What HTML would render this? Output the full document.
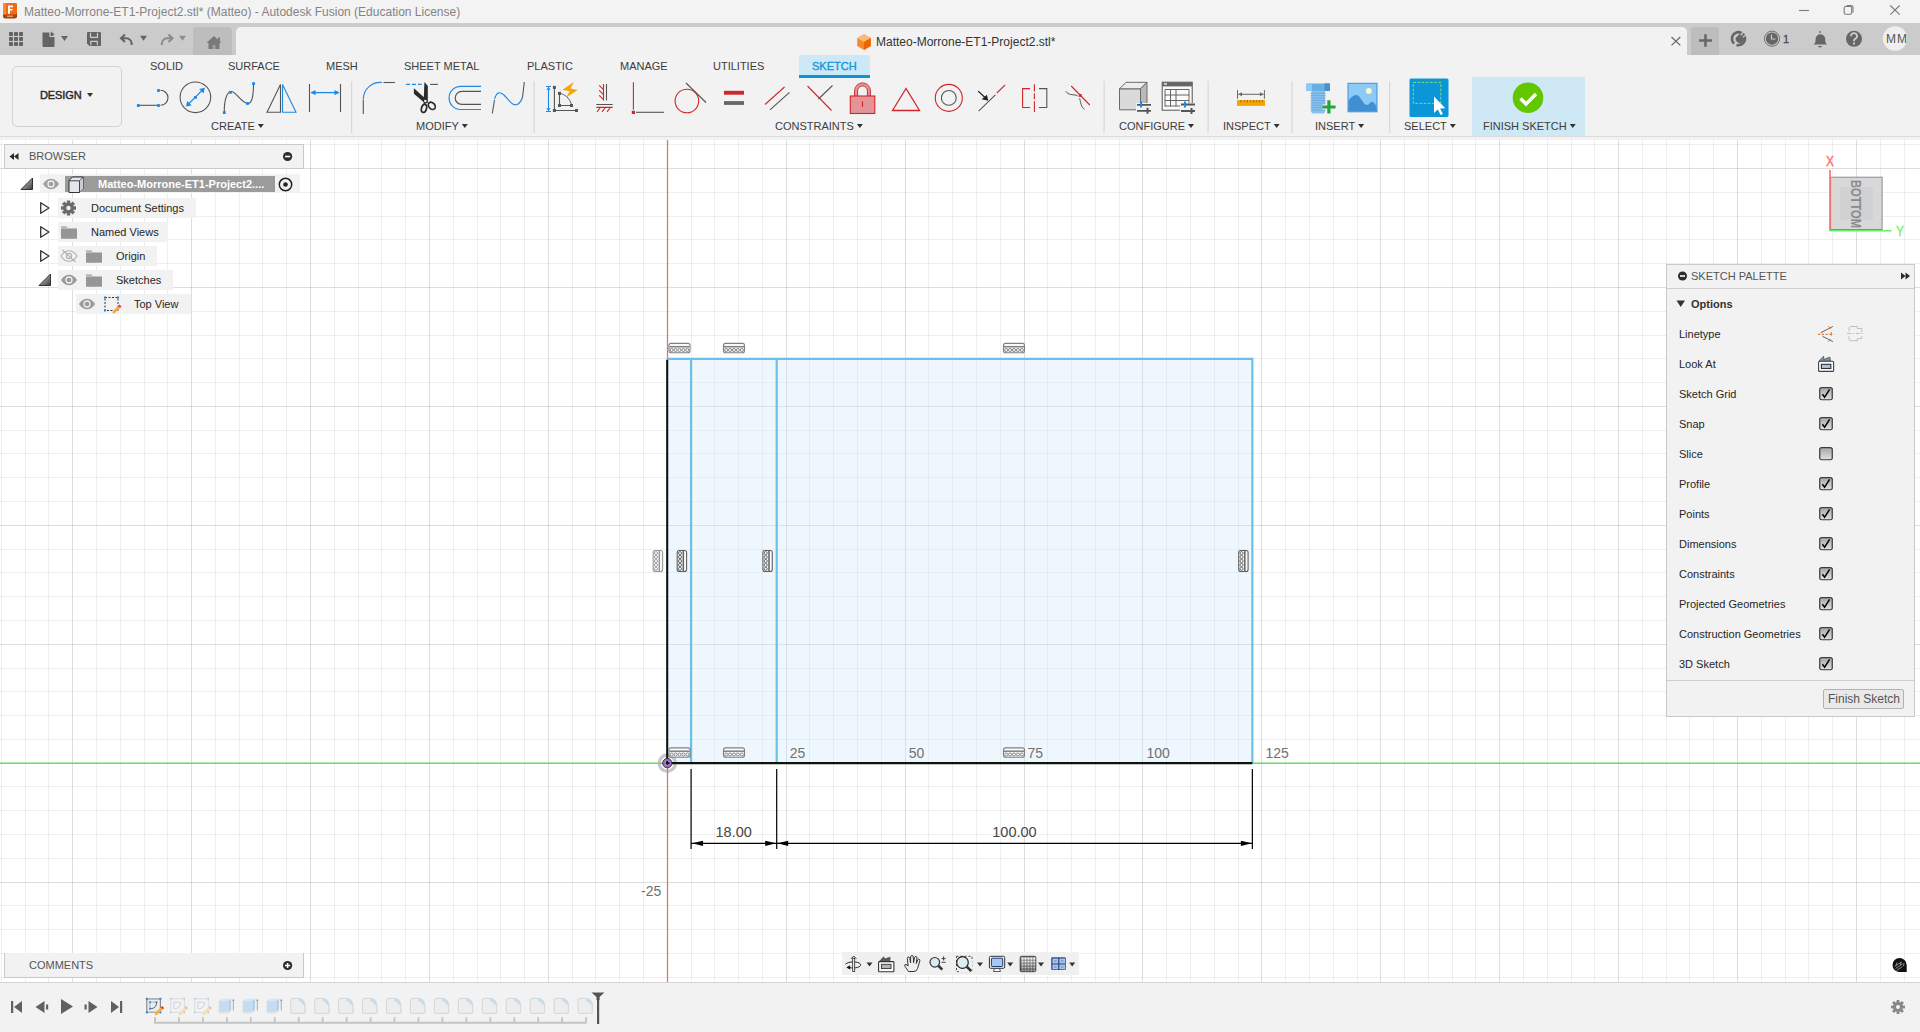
<!DOCTYPE html><html><head><meta charset="utf-8"><style>
html,body{margin:0;padding:0;width:1920px;height:1032px;overflow:hidden;background:#fff;font-family:'Liberation Sans', sans-serif}
.t{position:absolute;white-space:nowrap;line-height:normal}
.r{position:absolute}
.s{position:absolute;overflow:visible}
</style></head><body>
<svg class="s" style="left:0;top:0" width="1920" height="1032" viewBox="0 0 1920 1032"><rect x="0" y="137" width="1920" height="845" fill="#ffffff"/><path d="M1.5 140V982M25.5 140V982M48.5 140V982M96.5 140V982M120.5 140V982M144.5 140V982M167.5 140V982M215.5 140V982M239.5 140V982M262.5 140V982M286.5 140V982M334.5 140V982M358.5 140V982M381.5 140V982M405.5 140V982M453.5 140V982M477.5 140V982M500.5 140V982M524.5 140V982M572.5 140V982M595.5 140V982M619.5 140V982M643.5 140V982M691.5 140V982M714.5 140V982M738.5 140V982M762.5 140V982M809.5 140V982M833.5 140V982M857.5 140V982M881.5 140V982M928.5 140V982M952.5 140V982M976.5 140V982M1000.5 140V982M1047.5 140V982M1071.5 140V982M1095.5 140V982M1119.5 140V982M1166.5 140V982M1190.5 140V982M1214.5 140V982M1238.5 140V982M1285.5 140V982M1309.5 140V982M1333.5 140V982M1357.5 140V982M1404.5 140V982M1428.5 140V982M1452.5 140V982M1475.5 140V982M1523.5 140V982M1547.5 140V982M1571.5 140V982M1594.5 140V982M1642.5 140V982M1666.5 140V982M1689.5 140V982M1713.5 140V982M1761.5 140V982M1785.5 140V982M1808.5 140V982M1832.5 140V982M1880.5 140V982M1904.5 140V982" stroke="#000" stroke-opacity="0.063" stroke-width="1" fill="none"/><path d="M0 144.5H1920M0 192.5H1920M0 216.5H1920M0 239.5H1920M0 263.5H1920M0 311.5H1920M0 335.5H1920M0 358.5H1920M0 382.5H1920M0 430.5H1920M0 453.5H1920M0 477.5H1920M0 501.5H1920M0 549.5H1920M0 572.5H1920M0 596.5H1920M0 620.5H1920M0 668.5H1920M0 691.5H1920M0 715.5H1920M0 739.5H1920M0 786.5H1920M0 810.5H1920M0 834.5H1920M0 858.5H1920M0 905.5H1920M0 929.5H1920M0 953.5H1920M0 977.5H1920" stroke="#000" stroke-opacity="0.063" stroke-width="1" fill="none"/><path d="M72.5 140V982M191.5 140V982M310.5 140V982M429.5 140V982M548.5 140V982M786.5 140V982M905.5 140V982M1024.5 140V982M1142.5 140V982M1261.5 140V982M1380.5 140V982M1499.5 140V982M1618.5 140V982M1737.5 140V982M1856.5 140V982" stroke="#000" stroke-opacity="0.129" stroke-width="1" fill="none"/><path d="M0 168.5H1920M0 287.5H1920M0 406.5H1920M0 525.5H1920M0 644.5H1920M0 882.5H1920" stroke="#000" stroke-opacity="0.129" stroke-width="1" fill="none"/><rect x="667.3" y="358.83899999999994" width="585.0618000000002" height="404.31100000000004" fill="#d4eafb" fill-opacity="0.36"/><circle cx="667.3" cy="763.15" r="8.1" fill="none" stroke="#c2c2c2" stroke-width="3.4" opacity="0.9"/><path d="M667.5 140V358.83899999999994M667.5 763.15V982" stroke="#ee6b6b" stroke-width="1.25"/><path d="M0 763.2H667M1252.3618000000001 763.2H1920" stroke="#5fe05f" stroke-width="1.6"/><path d="M666.8 358.83899999999994H1252.3618000000001V763.15M691.083 358.83899999999994V763.15M776.7017999999999 358.83899999999994V763.15" stroke="#6cc0e8" stroke-width="2.2" fill="none"/><path d="M667.2 359.83899999999994V763.15H1252.3618000000001" stroke="#0c140c" stroke-width="2.1" fill="none"/><g font-family="Liberation Sans" font-size="14" fill="#707070"><text x="789.7149999999999" y="757.6">25</text><text x="908.63" y="757.6">50</text><text x="1027.545" y="757.6">75</text><text x="1146.46" y="757.6">100</text><text x="1265.375" y="757.6">125</text><text x="641" y="896">-25</text></g><g fill="none" stroke="#808080" stroke-width="1.1"><rect x="669.0" y="343.4" width="21" height="9.4" rx="2" fill="#fafafa" fill-opacity="0.85"/><path d="M669.5 346.7H689.5" stroke-width="1.5"/><g stroke-width="0.95"><circle cx="671.7" cy="350.0" r="1.55"/><circle cx="675.6" cy="350.0" r="1.55"/><circle cx="679.5" cy="350.0" r="1.55"/><circle cx="683.4000000000001" cy="350.0" r="1.55"/><circle cx="687.3000000000001" cy="350.0" r="1.55"/></g></g><g fill="none" stroke="#808080" stroke-width="1.1"><rect x="669.0" y="747.9" width="21" height="9.4" rx="2" fill="#fafafa" fill-opacity="0.85"/><path d="M669.5 751.1999999999999H689.5" stroke-width="1.5"/><g stroke-width="0.95"><circle cx="671.7" cy="754.5" r="1.55"/><circle cx="675.6" cy="754.5" r="1.55"/><circle cx="679.5" cy="754.5" r="1.55"/><circle cx="683.4000000000001" cy="754.5" r="1.55"/><circle cx="687.3000000000001" cy="754.5" r="1.55"/></g></g><g fill="none" stroke="#808080" stroke-width="1.1"><rect x="723.5" y="343.4" width="21" height="9.4" rx="2" fill="#fafafa" fill-opacity="0.85"/><path d="M724.0 346.7H744.0" stroke-width="1.5"/><g stroke-width="0.95"><circle cx="726.2" cy="350.0" r="1.55"/><circle cx="730.1" cy="350.0" r="1.55"/><circle cx="734.0" cy="350.0" r="1.55"/><circle cx="737.9000000000001" cy="350.0" r="1.55"/><circle cx="741.8000000000001" cy="350.0" r="1.55"/></g></g><g fill="none" stroke="#808080" stroke-width="1.1"><rect x="723.5" y="747.9" width="21" height="9.4" rx="2" fill="#fafafa" fill-opacity="0.85"/><path d="M724.0 751.1999999999999H744.0" stroke-width="1.5"/><g stroke-width="0.95"><circle cx="726.2" cy="754.5" r="1.55"/><circle cx="730.1" cy="754.5" r="1.55"/><circle cx="734.0" cy="754.5" r="1.55"/><circle cx="737.9000000000001" cy="754.5" r="1.55"/><circle cx="741.8000000000001" cy="754.5" r="1.55"/></g></g><g fill="none" stroke="#808080" stroke-width="1.1"><rect x="1003.5" y="343.4" width="21" height="9.4" rx="2" fill="#fafafa" fill-opacity="0.85"/><path d="M1004.0 346.7H1024.0" stroke-width="1.5"/><g stroke-width="0.95"><circle cx="1006.2" cy="350.0" r="1.55"/><circle cx="1010.1" cy="350.0" r="1.55"/><circle cx="1014.0" cy="350.0" r="1.55"/><circle cx="1017.9000000000001" cy="350.0" r="1.55"/><circle cx="1021.8000000000001" cy="350.0" r="1.55"/></g></g><g fill="none" stroke="#808080" stroke-width="1.1"><rect x="1003.5" y="747.9" width="21" height="9.4" rx="2" fill="#fafafa" fill-opacity="0.85"/><path d="M1004.0 751.1999999999999H1024.0" stroke-width="1.5"/><g stroke-width="0.95"><circle cx="1006.2" cy="754.5" r="1.55"/><circle cx="1010.1" cy="754.5" r="1.55"/><circle cx="1014.0" cy="754.5" r="1.55"/><circle cx="1017.9000000000001" cy="754.5" r="1.55"/><circle cx="1021.8000000000001" cy="754.5" r="1.55"/></g></g><g transform="rotate(90 658 561)"><g fill="none" stroke="#9a9a9a" stroke-width="1.1"><rect x="647.5" y="556.4" width="21" height="9.4" rx="2" fill="#fafafa" fill-opacity="0.85"/><path d="M648.0 559.6999999999999H668.0" stroke-width="1.5"/><g stroke-width="0.95"><circle cx="650.2" cy="563.0" r="1.55"/><circle cx="654.1" cy="563.0" r="1.55"/><circle cx="658.0" cy="563.0" r="1.55"/><circle cx="661.9000000000001" cy="563.0" r="1.55"/><circle cx="665.8000000000001" cy="563.0" r="1.55"/></g></g></g><g transform="rotate(90 682 561)"><g fill="none" stroke="#606060" stroke-width="1.1"><rect x="671.5" y="556.4" width="21" height="9.4" rx="2" fill="#fafafa" fill-opacity="0.85"/><path d="M672.0 559.6999999999999H692.0" stroke-width="1.5"/><g stroke-width="0.95"><circle cx="674.2" cy="563.0" r="1.55"/><circle cx="678.1" cy="563.0" r="1.55"/><circle cx="682.0" cy="563.0" r="1.55"/><circle cx="685.9000000000001" cy="563.0" r="1.55"/><circle cx="689.8000000000001" cy="563.0" r="1.55"/></g></g></g><g transform="rotate(90 767.7 561)"><g fill="none" stroke="#606060" stroke-width="1.1"><rect x="757.2" y="556.4" width="21" height="9.4" rx="2" fill="#fafafa" fill-opacity="0.85"/><path d="M757.7 559.6999999999999H777.7" stroke-width="1.5"/><g stroke-width="0.95"><circle cx="759.9000000000001" cy="563.0" r="1.55"/><circle cx="763.8000000000001" cy="563.0" r="1.55"/><circle cx="767.7" cy="563.0" r="1.55"/><circle cx="771.6000000000001" cy="563.0" r="1.55"/><circle cx="775.5000000000001" cy="563.0" r="1.55"/></g></g></g><g transform="rotate(90 1243.5 561)"><g fill="none" stroke="#606060" stroke-width="1.1"><rect x="1233.0" y="556.4" width="21" height="9.4" rx="2" fill="#fafafa" fill-opacity="0.85"/><path d="M1233.5 559.6999999999999H1253.5" stroke-width="1.5"/><g stroke-width="0.95"><circle cx="1235.7" cy="563.0" r="1.55"/><circle cx="1239.6000000000001" cy="563.0" r="1.55"/><circle cx="1243.5" cy="563.0" r="1.55"/><circle cx="1247.4" cy="563.0" r="1.55"/><circle cx="1251.3" cy="563.0" r="1.55"/></g></g></g><path d="M691.083 769V849M776.7017999999999 769V849M1252.3618000000001 769V849" stroke="#000" stroke-width="1.2"/><path d="M691.083 843.3H1252.3618000000001" stroke="#000" stroke-width="1.2"/><path d="M692.083 843.3l11 -2.6v5.2z" fill="#000"/><path d="M776.2017999999999 843.3l-11 -2.6v5.2z" fill="#000"/><path d="M777.2017999999999 843.3l11 -2.6v5.2z" fill="#000"/><path d="M1251.8618000000001 843.3l-11 -2.6v5.2z" fill="#000"/><g font-family="Liberation Sans" font-size="14.5" fill="#464646"><text x="715.5" y="836.6">18.00</text><text x="992.3" y="836.6">100.00</text></g><circle cx="667.3" cy="763.15" r="3.4" fill="none" stroke="#9a66c8" stroke-width="2.4"/><circle cx="667.3" cy="763.15" r="4.7" fill="none" stroke="#222" stroke-width="0.8"/><circle cx="667.3" cy="763.15" r="1.6" fill="#111"/></svg>
<div class="r" style="left:0px;top:0px;width:1920px;height:23px;background:#f3f3f3;"></div>
<svg class="s" style="left:3px;top:3px;" width="15" height="16" viewBox="0 0 15 16"><rect x="0" y="0" width="14" height="15.5" rx="2" fill="#a8400a"/><rect x="0" y="0" width="14" height="11.5" rx="2" fill="#f26b10"/><rect x="0" y="0" width="3" height="11.5" fill="#f8893a"/><path d="M5 2.5h5v1.8H7v1.6h2.6v1.7H7v3.2H5z" fill="#fff"/><rect x="4" y="12.6" width="6" height="1.2" fill="#e0b090"/></svg>
<div class="t" style="left:24px;top:5px;font-size:12px;color:#838383;font-weight:normal;">Matteo-Morrone-ET1-Project2.stl* (Matteo) - Autodesk Fusion (Education License)</div>
<svg class="s" style="left:1790px;top:0px;" width="120" height="23" viewBox="0 0 120 23"><g stroke="#7a7a7a" stroke-width="1.1" fill="none"><path d="M9 10.5H19"/><rect x="54.2" y="6.5" width="7.5" height="7.8" rx="1.5"/><path d="M56.5 5.5h4.5a2 2 0 0 1 2 2v5"/><path d="M100.3 5.5l9.4 9.2M109.7 5.5l-9.4 9.2"/></g></svg>
<div class="r" style="left:0px;top:23px;width:1920px;height:32px;background:#cbcbcb;"></div>
<svg class="s" style="left:0px;top:0px;" width="30" height="56" viewBox="0 0 30 56"><rect x="9" y="32" width="4" height="4" rx="0.8" fill="#646464"/><rect x="9" y="37" width="4" height="4" rx="0.8" fill="#646464"/><rect x="9" y="42" width="4" height="4" rx="0.8" fill="#646464"/><rect x="14" y="32" width="4" height="4" rx="0.8" fill="#646464"/><rect x="14" y="37" width="4" height="4" rx="0.8" fill="#646464"/><rect x="14" y="42" width="4" height="4" rx="0.8" fill="#646464"/><rect x="19" y="32" width="4" height="4" rx="0.8" fill="#646464"/><rect x="19" y="37" width="4" height="4" rx="0.8" fill="#646464"/><rect x="19" y="42" width="4" height="4" rx="0.8" fill="#646464"/></svg>
<svg class="s" style="left:0px;top:0px;" width="200" height="56" viewBox="0 0 200 56"><path d="M42.5 32.5h7.5l4.5 4.5v9.2a0.8 0.8 0 0 1-.8.8h-10.4a0.8 0.8 0 0 1-.8-.8z" fill="#646464"/><path d="M51 31.2l3.8 3.8h-3.8z" fill="#646464"/><path d="M50 32v4.5h4.5" fill="none" stroke="#cbcbcb" stroke-width="1.2"/><path d="M61 36h7l-3.5 5z" fill="#646464"/><path d="M87 33a1 1 0 0 1 1-1h12a1 1 0 0 1 1 1v12a1 1 0 0 1-1 1h-10.5l-2.5-2.5z" fill="#646464"/><path d="M90.5 32.8v4.6h7v-4.6M90.8 45.2v-3.8h6.5v3.8" fill="none" stroke="#cbcbcb" stroke-width="1.2"/><path d="M125 34.5l-4 3.8 4 3.6M121 38.3h5.2a5.5 5.5 0 0 1 5.5 5.5v1.3" fill="none" stroke="#646464" stroke-width="2"/><path d="M140 35.8h7l-3.5 5z" fill="#646464"/><path d="M168.5 34.5l4 3.8-4 3.6M172.5 38.3h-5.2a5.5 5.5 0 0 0-5.5 5.5v1.3" fill="none" stroke="#8a8a8a" stroke-width="2"/><path d="M179 35.8h7l-3.5 5z" fill="#8e8e8e"/></svg>
<div class="r" style="left:193px;top:27px;width:39px;height:28px;background:#bdbdbd;border-radius:4px 4px 0 0"></div>
<svg class="s" style="left:0px;top:0px;" width="240" height="56" viewBox="0 0 240 56"><path d="M214 36l-7.5 6.8h2v6.2h11v-6.2h2z M218 37.5v3l2 1.8v-4.8z" fill="#7a7a7a"/><rect x="212.5" y="45" width="3" height="4" fill="#a0a0a0"/></svg>
<div class="r" style="left:236px;top:27px;width:1451px;height:28px;background:#f2f2f2;border-radius:5px 5px 0 0"></div>
<svg class="s" style="left:857px;top:34px;" width="15" height="17" viewBox="0 0 15 17"><path d="M7 0.3l6.8 3.8v8l-6.8 3.9-6.8-3.9v-8z" fill="#f58a2a"/><path d="M7 0.3l6.8 3.8-6.8 3.9-6.8-3.9z" fill="#fbb87a"/><path d="M7 8l6.8-3.9v8l-6.8 3.9z" fill="#f06400"/></svg>
<div class="t" style="left:876px;top:35px;font-size:12px;color:#333;font-weight:normal;">Matteo-Morrone-ET1-Project2.stl*</div>
<svg class="s" style="left:0px;top:0px;" width="1920" height="56" viewBox="0 0 1920 56"><path d="M1671.5 37l8.8 8.4M1680.3 37l-8.8 8.4" stroke="#6a6a6a" stroke-width="1.3"/></svg>
<div class="r" style="left:1691px;top:27px;width:28px;height:28px;background:#bdbdbd;border-radius:4px 4px 0 0"></div>
<svg class="s" style="left:0px;top:0px;" width="1920" height="56" viewBox="0 0 1920 56"><path d="M1705.5 34.2v12.6M1699 40.5h13" stroke="#686868" stroke-width="2.6"/><path d="M1734.2 43.6A6.5 6.5 0 1 1 1736.5 44.9" fill="none" stroke="#666" stroke-width="2.6"/><path d="M1740 33.5l5.5 5.5-3.5 3.5a3 3 0 0 1-4.2 0l-1.3-1.3a3 3 0 0 1 0-4.2z" fill="#666"/><path d="M1740.6 35l3.3-3.3M1743 37.4l3.3-3.3" stroke="#cbcbcb" stroke-width="1.3"/><path d="M1737 40.8a2.2 2.2 0 0 1 3-3" fill="none" stroke="#cbcbcb" stroke-width="0"/><circle cx="1772" cy="38.7" r="7.6" fill="none" stroke="#666" stroke-width="0.9"/><circle cx="1772" cy="38.7" r="6.2" fill="#666"/><path d="M1771.5 34.5v4.5h4" fill="none" stroke="#cbcbcb" stroke-width="1.2"/><path d="M1813.8 44.6c1.6-1.5 1.8-3 1.8-5.5a4.8 4.8 0 0 1 9.6 0c0 2.5 .2 4 1.8 5.5z" fill="#666"/><rect x="1819.3" y="31" width="1.4" height="2" fill="#666"/><path d="M1818 46h4a2 1.4 0 0 1-4 0z" fill="#666"/><circle cx="1854" cy="38.8" r="8" fill="#666"/><path d="M1851 36.2a3 3 0 1 1 4.2 2.7c-.8.4-1.2.9-1.2 1.8v.6" fill="none" stroke="#cbcbcb" stroke-width="1.8"/><rect x="1853" y="42.5" width="2" height="2" fill="#cbcbcb"/><circle cx="1895" cy="38.5" r="12.2" fill="#efefef"/></svg>
<div class="t" style="left:1783px;top:33px;font-size:11px;color:#4a4a4a;font-weight:normal;-webkit-text-stroke:0.3px #4a4a4a">1</div>
<div class="t" style="left:1886px;top:32px;font-size:12px;color:#555;font-weight:normal;letter-spacing:1px">MM</div>
<div class="r" style="left:0px;top:55px;width:236px;height:82px;background:#f2f2f2;"></div>
<div class="r" style="left:236px;top:55px;width:1684px;height:82px;background:#f2f2f2;"></div>
<div class="r" style="left:0px;top:136px;width:1920px;height:1px;background:#dcdcdc;"></div>
<div class="r" style="left:0px;top:137px;width:1920px;height:3px;background:#f2f2f2;"></div>
<div class="r" style="left:12px;top:66px;width:108px;height:59px;background:transparent;border:1px solid #d2d2d2;border-radius:5px"></div>
<div class="t" style="left:40px;top:89px;font-size:11px;color:#2a2a2a;font-weight:normal;-webkit-text-stroke:0.45px #2a2a2a;letter-spacing:-0.1px">DESIGN</div>
<svg class="s" style="left:0px;top:0px;" width="120" height="140" viewBox="0 0 120 140"><path d="M87 93h6l-3 4z" fill="#333"/></svg>
<div class="t" style="left:150px;top:60px;font-size:11px;color:#3c3c3c;font-weight:normal;">SOLID</div>
<div class="t" style="left:228px;top:60px;font-size:11px;color:#3c3c3c;font-weight:normal;">SURFACE</div>
<div class="t" style="left:326px;top:60px;font-size:11px;color:#3c3c3c;font-weight:normal;">MESH</div>
<div class="t" style="left:404px;top:60px;font-size:11px;color:#3c3c3c;font-weight:normal;">SHEET METAL</div>
<div class="t" style="left:527px;top:60px;font-size:11px;color:#3c3c3c;font-weight:normal;">PLASTIC</div>
<div class="t" style="left:620px;top:60px;font-size:11px;color:#3c3c3c;font-weight:normal;">MANAGE</div>
<div class="t" style="left:713px;top:60px;font-size:11px;color:#3c3c3c;font-weight:normal;">UTILITIES</div>
<div class="r" style="left:799px;top:55px;width:71px;height:23px;background:#cde8f6;"></div>
<div class="r" style="left:799px;top:75px;width:71px;height:3px;background:#0b96d8;"></div>
<div class="t" style="left:812px;top:60px;font-size:11px;color:#1296d6;font-weight:normal;-webkit-text-stroke:0.35px #1296d6">SKETCH</div>
<div class="t" style="left:211px;top:120px;font-size:11px;color:#3c3c3c;font-weight:normal;">CREATE</div>
<div class="t" style="left:416px;top:120px;font-size:11px;color:#3c3c3c;font-weight:normal;">MODIFY</div>
<div class="t" style="left:775px;top:120px;font-size:11px;color:#3c3c3c;font-weight:normal;">CONSTRAINTS</div>
<div class="t" style="left:1119px;top:120px;font-size:11px;color:#3c3c3c;font-weight:normal;">CONFIGURE</div>
<div class="t" style="left:1223px;top:120px;font-size:11px;color:#3c3c3c;font-weight:normal;">INSPECT</div>
<div class="t" style="left:1315px;top:120px;font-size:11px;color:#3c3c3c;font-weight:normal;">INSERT</div>
<div class="t" style="left:1404px;top:120px;font-size:11px;color:#3c3c3c;font-weight:normal;">SELECT</div>
<div class="r" style="left:1472px;top:77px;width:113px;height:59px;background:#cfe8f5;"></div>
<div class="t" style="left:1483px;top:120px;font-size:11px;color:#3c3c3c;font-weight:normal;">FINISH SKETCH</div>
<svg class="s" style="left:0px;top:0px;" width="1920" height="140" viewBox="0 0 1920 140"><path d="M257.8125 124h6l-3 4z" fill="#333"/><path d="M461.78125 124h6l-3 4z" fill="#333"/><path d="M856.84375 124h6l-3 4z" fill="#333"/><path d="M1188.0 124h6l-3 4z" fill="#333"/><path d="M1273.6875 124h6l-3 4z" fill="#333"/><path d="M1358.140625 124h6l-3 4z" fill="#333"/><path d="M1449.8125 124h6l-3 4z" fill="#333"/><path d="M1569.75 124h6l-3 4z" fill="#333"/><rect x="351" y="81" width="1.2" height="52" fill="#d8d8d8"/><rect x="533.5" y="81" width="1.2" height="52" fill="#d8d8d8"/><rect x="1103.5" y="81" width="1.2" height="52" fill="#d8d8d8"/><rect x="1207.5" y="81" width="1.2" height="52" fill="#d8d8d8"/><rect x="1291.5" y="81" width="1.2" height="52" fill="#d8d8d8"/><rect x="1389" y="81" width="1.2" height="52" fill="#d8d8d8"/></svg>
<svg class="s" style="left:0px;top:0px;" width="1920" height="140" viewBox="0 0 1920 140"><path d="M138 105.3H158.5" stroke="#555" stroke-width="1.1"/><path d="M160.5 90.3a7.5 7.5 0 0 1 0 15" fill="none" stroke="#555" stroke-width="1.1"/><rect x="136.9" y="104.1" width="2.8" height="2.8" fill="#1e88e5"/><rect x="157.1" y="104.1" width="2.8" height="2.8" fill="#1e88e5"/><rect x="157.1" y="89.1" width="2.8" height="2.8" fill="#1e88e5"/><circle cx="195.4" cy="97.3" r="15.3" fill="none" stroke="#555" stroke-width="1.1"/><path d="M188 104.5l14-14" stroke="#1e88e5" stroke-width="1.1"/><path d="M204.8 87.8l-5.6 1.2 4.4 4.4z M186 106.6l1.2-5.6 4.4 4.4z" fill="#1e88e5"/><rect x="194.1" y="96.0" width="2.8" height="2.8" fill="#1e88e5"/><path d="M224.3 112.5C224 100 227 92 231 91.5 236 91 240 102 247.5 103.5 252 104 253.5 96 253.5 83.5" fill="none" stroke="#555" stroke-width="1.1"/><rect x="222.9" y="111.19999999999999" width="2.8" height="2.8" fill="#1e88e5"/><rect x="229.1" y="90.89999999999999" width="2.8" height="2.8" fill="#1e88e5"/><rect x="246.1" y="102.1" width="2.8" height="2.8" fill="#1e88e5"/><rect x="252.2" y="82.19999999999999" width="2.8" height="2.8" fill="#1e88e5"/><path d="M267 112.3L280.5 84.5V112.3Z" fill="none" stroke="#555" stroke-width="1.1"/><path d="M282.5 84.5L296 112.3H282.5Z" fill="none" stroke="#1e88e5" stroke-width="1.1"/><path d="M309.5 84v28M340.5 84v28" stroke="#555" stroke-width="1.1"/><path d="M311 92.6h28" stroke="#1e88e5" stroke-width="1.3"/><path d="M310.5 92.6l5-2.6v5.2zM339.5 92.6l-5-2.6v5.2z" fill="#1e88e5"/><path d="M363.3 99.5v14.5" stroke="#555" stroke-width="1.1"/><path d="M363.3 99A17 17 0 0 1 382 82.5" fill="none" stroke="#1e88e5" stroke-width="1.1"/><path d="M383.5 82.5H395" stroke="#555" stroke-width="1.1"/><path d="M406 84.4h15.7" stroke="#1e88e5" stroke-width="1.1" stroke-dasharray="4 2"/><path d="M430.1 84.4h7.8" stroke="#555" stroke-width="1.1"/><path d="M424.4 82l3.4 4v16.8l-4.2 1.5z" fill="#2a2a2a"/><path d="M413.9 88.2l12.6 11.3-1.2 4-11.4-9.8z" fill="#2a2a2a"/><circle cx="425.3" cy="100.9" r="1.25" fill="#f2f2f2"/><ellipse cx="424" cy="108.4" rx="2.5" ry="4.1" transform="rotate(15 424 108.4)" fill="none" stroke="#2a2a2a" stroke-width="1.7"/><ellipse cx="431.8" cy="105.8" rx="3" ry="4" transform="rotate(-40 431.8 105.8)" fill="none" stroke="#2a2a2a" stroke-width="1.7"/><path d="M481 86.3h-20.3a11.6 11.6 0 0 0 0 23.2h20.3" fill="none" stroke="#1e88e5" stroke-width="1.2"/><path d="M481 91.4h-19.3a6.5 6.5 0 0 0 0 13h19.3" fill="none" stroke="#555" stroke-width="1.2"/><path d="M492.3 113.5L494.5 100" fill="none" stroke="#555" stroke-width="1.1"/><path d="M494.5 99C497 91 500 92 504 95 510 101 513 107 518 104 521 102 522 99 522.5 97" fill="none" stroke="#1e88e5" stroke-width="1.1"/><path d="M522.5 97.5L524.3 82" fill="none" stroke="#555" stroke-width="1.1"/><path d="M548.5 87v24M546 86.5h5M546 111.5h5" stroke="#1e88e5" stroke-width="1.1"/><path d="M548.5 87.2l-2.3 2.6h4.6zM548.5 110.8l-2.3-2.6h4.6z" fill="#1e88e5"/><path d="M554.4 87.4v23.1h22.1M559.5 93.4v12.1h12" fill="none" stroke="#555" stroke-width="1.1"/><path d="M559.5 93.4c5 .5 11 5 12 12.1" fill="none" stroke="#555" stroke-width="0.9"/><rect x="552.9" y="85.9" width="3" height="3" fill="#555"/><rect x="552.9" y="109.0" width="3" height="3" fill="#555"/><rect x="575.0" y="109.0" width="3" height="3" fill="#555"/><rect x="558.0" y="91.9" width="3" height="3" fill="#555"/><rect x="558.0" y="104.0" width="3" height="3" fill="#555"/><rect x="570.0" y="104.0" width="3" height="3" fill="#555"/><path d="M573.8 82L562.5 89.8 569.6 91.2 566.2 97.6 577.7 90 570.6 88.4Z" fill="#f5a50a"/><path d="M606.5 84V100.5M596.3 104.5H612.7" stroke="#555" stroke-width="1.1"/><path d="M603.5 84V100.5M599.2 85.3l4.3 4.4M599.2 90.3l4.3 4.4M599.2 95.3l4.3 4.4M596.3 107.4H612.7M597 111.8l3-3.8M602 111.8l3-3.8M607 111.8l3-3.8" stroke="#d0262b" stroke-width="1.1" fill="none"/><path d="M633.4 82.3v27.4" stroke="#d0262b" stroke-width="1.1"/><path d="M636 112.3H664" stroke="#555" stroke-width="1.1"/><rect x="631.8" y="110.80000000000001" width="3.2" height="3.2" fill="#d0262b"/><circle cx="686.9" cy="101" r="11.8" fill="none" stroke="#d0262b" stroke-width="1.1"/><path d="M686 83l20 19.5" stroke="#555" stroke-width="1.1"/><rect x="724" y="90.8" width="20" height="3.9" fill="#d0262b"/><rect x="724" y="101.1" width="20" height="3.8" fill="#666"/><path d="M765 104.5l19.5-17.5" stroke="#d0262b" stroke-width="1.1"/><path d="M770 109.8l19.5-17.5" stroke="#555" stroke-width="1.1"/><path d="M807.5 86l24 24.5" stroke="#d0262b" stroke-width="1.1"/><path d="M818.5 99l14-13.5" stroke="#555" stroke-width="1.1"/><path d="M856.2 96v-5.2a6.3 6.3 0 0 1 12.6 0V96" fill="none" stroke="#e39497" stroke-width="2.4"/><path d="M854.6 96v-5.2a7.9 7.9 0 0 1 15.8 0V96M857.6 96v-5.2a4.9 4.9 0 0 1 9.8 0V96" fill="none" stroke="#d0262b" stroke-width="1"/><rect x="850.3" y="96" width="24.5" height="17.5" fill="#e39497" stroke="#d0262b" stroke-width="1.1"/><path d="M862.5 101.3v5.6" stroke="#d0262b" stroke-width="1.1"/><path d="M906 88.5L892.5 110.5H919.5Z" fill="none" stroke="#d0262b" stroke-width="1.3"/><circle cx="948.8" cy="97.9" r="13.5" fill="none" stroke="#d0262b" stroke-width="1.1"/><circle cx="948.8" cy="97.9" r="7.4" fill="none" stroke="#555" stroke-width="1.1"/><path d="M978.6 111.2L995.4 94.8" stroke="#555" stroke-width="1.1"/><path d="M996.8 93L1005.2 84.9" stroke="#d0262b" stroke-width="1.1"/><path d="M978.2 91.1l6.5 6.2" stroke="#222" stroke-width="1.3"/><path d="M988.3 100.8l-6.6-1.5 5.2-4.5z" fill="#222"/><path d="M1030 88.6H1022.6V107.5H1030" fill="none" stroke="#d0262b" stroke-width="1.1"/><path d="M1039 88.6H1046.8V107.5H1039" fill="none" stroke="#555" stroke-width="1.1"/><path d="M1034.4 84.2V91.6M1034.4 93.3V99.3M1034.4 101.3V111.9" stroke="#d0262b" stroke-width="1.1"/><path d="M1065.8 91.2C1067 93.5 1069.5 94.5 1073 94.8 1076 95 1077.5 95.5 1078.2 96.3M1079.6 98.4C1080.5 101 1080.5 104 1082 106.5 1082.8 108 1083.5 108.8 1084.5 109.2" fill="none" stroke="#555" stroke-width="1"/><path d="M1071.2 86L1089.8 105" stroke="#d0262b" stroke-width="1.1"/><rect x="1078.8999999999999" y="94.1" width="2.8" height="2.8" fill="#d0262b"/><path d="M1119.5 88.8h21v21h-21z" fill="#dadada" stroke="#6a6a6a" stroke-width="1"/><path d="M1119.5 88.8l6.5-6.5h21l-6.5 6.5z" fill="#ececec" stroke="#6a6a6a" stroke-width="1" stroke-linejoin="round"/><path d="M1140.5 88.8l6.5-6.5v21l-6.5 6.5z" fill="#b9b9b9" stroke="#6a6a6a" stroke-width="1" stroke-linejoin="round"/><rect x="1136" y="103" width="16" height="11" fill="#f2f2f2"/><path d="M1137 104.8h14M1137 110.8h14" stroke="#555" stroke-width="1.8"/><path d="M1141 101.5v6" stroke="#1e88e5" stroke-width="2"/><path d="M1147.5 107.8v6" stroke="#555" stroke-width="2"/><rect x="1162.2" y="82.2" width="30" height="28" fill="#fafafa" stroke="#555" stroke-width="1"/><rect x="1162.2" y="82.2" width="30" height="4.2" fill="#666"/><rect x="1164" y="83.3" width="3" height="1.3" fill="#fff"/><path d="M1165 89.5h24M1165 95h24M1165 100.5h24M1165 106h24M1165 89.5v17M1170.5 89.5v17M1176 89.5v17M1189 89.5v17" stroke="#555" stroke-width="0.9" fill="none"/><rect x="1180" y="103" width="16" height="10" fill="#f2f2f2"/><path d="M1181 104.5h14M1181 111h14" stroke="#555" stroke-width="1.8"/><path d="M1185 101.5v6" stroke="#1e88e5" stroke-width="2"/><path d="M1191.5 108v6" stroke="#555" stroke-width="2"/><path d="M1237.5 90v8.8M1264.4 90v8.8M1238.5 94.3h25" stroke="#666" stroke-width="1"/><path d="M1238.2 94.3l3.8-2v4zM1263.7 94.3l-3.8-2v4z" fill="#666"/><rect x="1237" y="100.1" width="28" height="5.8" fill="#f5a300"/><path d="M1240.8 100.1v2.3M1244.6 100.1v1.6M1247.5 100.1v2.3M1250.8 100.1v1.6M1253.8 100.1v2.3M1256.7 100.1v1.6M1259.6 100.1v2.3M1262.5 100.1v1.6" stroke="#7a5a10" stroke-width="0.8"/><path d="M1306.3 85a1.6 1.6 0 0 1 1.6-1.6h20.5a1.6 1.6 0 0 1 1.6 1.6v5.9h-23.7z" fill="#6aafe2"/><rect x="1306.3" y="83.4" width="5.7" height="7.5" fill="#8ccaf7"/><rect x="1324.5" y="83.4" width="5.5" height="7.5" fill="#4a90cc"/><path d="M1311.3 90.9h13.7v20.5a2 2 0 0 1-2 2h-9.7a2 2 0 0 1-2-2z" fill="#8ac2ee"/><path d="M1310.5 93.3h15.3M1310.5 95.7h15.3M1310.5 98.1h15.3M1310.5 100.5h15.3M1310.5 102.9h15.3M1310.5 105.3h15.3M1310.5 107.7h15.3M1310.5 110.1h15.3" stroke="#5b9fd6" stroke-width="0.7"/><path d="M1328.9 100.3v13.3M1322.3 107h13.3" stroke="#f2f2f2" stroke-width="5.2"/><path d="M1328.9 100.3v13.3M1322.3 107h13.3" stroke="#20a63a" stroke-width="3.2"/><rect x="1348" y="83.3" width="29" height="28.5" fill="#8ccaf7" stroke="#3f8fd2" stroke-width="1"/><path d="M1348.5 100.5c2.5-3.5 5-5.5 8.2-5.5 3.5 0 6.5 10 10 10 2.5 0 3.5-3.2 5-3.2 2 0 3.5 2.5 4.8 4.5v5h-28z" fill="#3f8fd2"/><circle cx="1368.8" cy="90.9" r="2.9" fill="#fffbcc"/><rect x="1409.5" y="78.5" width="39" height="38.5" rx="1.5" fill="#0b96d8"/><rect x="1413.3" y="82.4" width="27.5" height="21" fill="none" stroke="#86e07a" stroke-width="1" stroke-dasharray="2.6 1.6"/><path d="M1434 96.5v16.5l3.7-3.6 3 5.6 2.2-1.1-2.8-5.4 5.2-.3z" fill="#fff"/><circle cx="1528" cy="97.7" r="15.3" fill="#63c700"/><path d="M1520.5 98.5l5.5 5.5 10-10" fill="none" stroke="#fff" stroke-width="3.4"/></svg>
<div class="r" style="left:4px;top:144px;width:298px;height:23px;background:#f2f2f2;border:1px solid #c9c9c9"></div>
<svg class="s" style="left:0px;top:0px;" width="320" height="320" viewBox="0 0 320 320"><path d="M9.5 156.5l4.5-3.5v7z M14 156.5l4.5-3.5v7z" fill="#2b2b2b"/><circle cx="287.6" cy="156.5" r="4.6" fill="#2d2d2d"/><rect x="285" y="155.7" width="5.2" height="1.6" fill="#fff"/></svg>
<div class="t" style="left:29px;top:150px;font-size:11px;color:#555;font-weight:normal;">BROWSER</div>
<div class="r" style="left:40px;top:174px;width:260px;height:19px;background:#f2f2f2;"></div>
<div class="r" style="left:65px;top:176px;width:210px;height:16px;background:#9b9b9b;"></div>
<div class="t" style="left:98px;top:178px;font-size:11px;color:#ffffff;font-weight:bold;">Matteo-Morrone-ET1-Project2....</div>
<div class="r" style="left:58px;top:198px;width:138px;height:20px;background:#f2f2f2;"></div>
<div class="t" style="left:91px;top:202px;font-size:11px;color:#262626;font-weight:normal;">Document Settings</div>
<div class="r" style="left:58px;top:222px;width:110px;height:20px;background:#f2f2f2;"></div>
<div class="t" style="left:91px;top:226px;font-size:11px;color:#262626;font-weight:normal;">Named Views</div>
<div class="r" style="left:58px;top:246px;width:99px;height:20px;background:#f2f2f2;"></div>
<div class="t" style="left:116px;top:250px;font-size:11px;color:#262626;font-weight:normal;">Origin</div>
<div class="r" style="left:58px;top:270px;width:115px;height:20px;background:#f2f2f2;"></div>
<div class="t" style="left:116px;top:274px;font-size:11px;color:#262626;font-weight:normal;">Sketches</div>
<div class="r" style="left:76px;top:294px;width:115px;height:20px;background:#f2f2f2;"></div>
<div class="t" style="left:134px;top:298px;font-size:11px;color:#262626;font-weight:normal;">Top View</div>
<svg class="s" style="left:0px;top:0px;" width="320" height="320" viewBox="0 0 320 320"><defs><linearGradient id="tg21178" x1="0" y1="0" x2="1" y2="1"><stop offset="0" stop-color="#dcdcdc"/><stop offset="1" stop-color="#3c3c3c"/></linearGradient></defs><path d="M21 189.5L32.5 178V189.5z" fill="url(#tg21178)" stroke="#222" stroke-width="0.9"/><path d="M43 184c2.5-3.8 5-5.3 8-5.3s5.5 1.5 8 5.3c-2.5 3.8-5 5.3-8 5.3s-5.5-1.5-8-5.3z" fill="#a0a0a0"/><circle cx="51" cy="184" r="3" fill="none" stroke="#f0f0f0" stroke-width="1.3"/><path d="M69 180.5l3.5-3.5h10.5v12l-3.5 3.5H69z" fill="#e3e6ea" stroke="#333" stroke-width="1"/><path d="M79.5 181v11.5M69 180.8h10.5l3.5-3.5" fill="none" stroke="#333" stroke-width="0.9"/><path d="M80 181l3-3v11l-3 3z" fill="#c9ccd2"/><circle cx="285.5" cy="184.5" r="6.2" fill="none" stroke="#222" stroke-width="1.5"/><circle cx="285.5" cy="184.5" r="2.3" fill="#222"/><path d="M40.7 202.7L49 208L40.7 213.3z" fill="#fafafa" stroke="#333" stroke-width="1.3" stroke-linejoin="round"/><g transform="translate(68.5 208)"><circle r="5.2" fill="#6a6a6a"/><rect x="-1.7" y="-7.5" width="3.4" height="4" fill="#6a6a6a" transform="rotate(0)"/><rect x="-1.7" y="-7.5" width="3.4" height="4" fill="#6a6a6a" transform="rotate(45)"/><rect x="-1.7" y="-7.5" width="3.4" height="4" fill="#6a6a6a" transform="rotate(90)"/><rect x="-1.7" y="-7.5" width="3.4" height="4" fill="#6a6a6a" transform="rotate(135)"/><rect x="-1.7" y="-7.5" width="3.4" height="4" fill="#6a6a6a" transform="rotate(180)"/><rect x="-1.7" y="-7.5" width="3.4" height="4" fill="#6a6a6a" transform="rotate(225)"/><rect x="-1.7" y="-7.5" width="3.4" height="4" fill="#6a6a6a" transform="rotate(270)"/><rect x="-1.7" y="-7.5" width="3.4" height="4" fill="#6a6a6a" transform="rotate(315)"/><circle r="2.2" fill="#f0f0f0"/></g><path d="M40.7 226.7L49 232L40.7 237.3z" fill="#fafafa" stroke="#333" stroke-width="1.3" stroke-linejoin="round"/><path d="M61 226.5h5.5l1 1.5H77V238.5H61z" fill="#969696"/><rect x="61" y="228.7" width="16" height="9.8" fill="#969696"/><path d="M61 228.1H77" stroke="#f0f0f0" stroke-width="0.8"/><path d="M40.7 250.7L49 256L40.7 261.3z" fill="#fafafa" stroke="#333" stroke-width="1.3" stroke-linejoin="round"/><g fill="none" stroke="#b0b0b0" stroke-width="1.1"><path d="M61 256c2.5-3.8 5-5.3 8-5.3s5.5 1.5 8 5.3c-2.5 3.8-5 5.3-8 5.3s-5.5-1.5-8-5.3z"/><circle cx="69" cy="256" r="2.6"/><path d="M62.5 250l13 12"/></g><path d="M86 250.5h5.5l1 1.5H102V262.5H86z" fill="#969696"/><rect x="86" y="252.7" width="16" height="9.8" fill="#969696"/><path d="M86 252.1H102" stroke="#f0f0f0" stroke-width="0.8"/><defs><linearGradient id="tg39274" x1="0" y1="0" x2="1" y2="1"><stop offset="0" stop-color="#dcdcdc"/><stop offset="1" stop-color="#3c3c3c"/></linearGradient></defs><path d="M39 285.5L50.5 274V285.5z" fill="url(#tg39274)" stroke="#222" stroke-width="0.9"/><path d="M61 280c2.5-3.8 5-5.3 8-5.3s5.5 1.5 8 5.3c-2.5 3.8-5 5.3-8 5.3s-5.5-1.5-8-5.3z" fill="#9a9a9a"/><circle cx="69" cy="280" r="3" fill="none" stroke="#f0f0f0" stroke-width="1.3"/><path d="M86 274.5h5.5l1 1.5H102V286.5H86z" fill="#969696"/><rect x="86" y="276.7" width="16" height="9.8" fill="#969696"/><path d="M86 276.1H102" stroke="#f0f0f0" stroke-width="0.8"/><path d="M79 304c2.5-3.8 5-5.3 8-5.3s5.5 1.5 8 5.3c-2.5 3.8-5 5.3-8 5.3s-5.5-1.5-8-5.3z" fill="#9a9a9a"/><circle cx="87" cy="304" r="3" fill="none" stroke="#f0f0f0" stroke-width="1.3"/><rect x="105" y="297.5" width="13" height="13" fill="none" stroke="#333" stroke-width="1" stroke-dasharray="2 1.5"/><rect x="104" y="296.5" width="2" height="2" fill="#1e88e5"/><rect x="117" y="296.5" width="2" height="2" fill="#1e88e5"/><rect x="104" y="309.5" width="2" height="2" fill="#1e88e5"/><path d="M113 311l5-5 2 2-5 5-2.5.5z" fill="#f2a93b"/><path d="M118 306l1.5-1.5 2 2-1.5 1.5z" fill="#e53935"/></svg>
<svg class="s" style="left:0px;top:0px;" width="1920" height="260" viewBox="0 0 1920 260"><rect x="1830.6" y="177.2" width="51.5" height="52.3" fill="#d8d8d8" stroke="#8c8c8c" stroke-width="1"/><rect x="1840" y="187" width="33" height="33" fill="#d0d1d3"/><path d="M1830 170V231" stroke="#ff6a6a" stroke-width="1.6"/><path d="M1830 230.8H1891.5" stroke="#66ee66" stroke-width="1.6"/><text transform="translate(1826 165.8) scale(0.82 1)" font-family="Liberation Sans" font-size="14.5" fill="#ff7878" stroke="#ff7878" stroke-width="0.5">X</text><text transform="translate(1896 235.6) scale(0.82 1)" font-family="Liberation Sans" font-size="14.5" fill="#80f080" stroke="#80f080" stroke-width="0.5">Y</text><text transform="translate(1850.8 180) rotate(90)" font-family="Liberation Sans" font-weight="bold" font-size="14.5" fill="#8a8a8a" textLength="48" lengthAdjust="spacingAndGlyphs">BOTTOM</text></svg>
<div class="r" style="left:1666px;top:264px;width:247px;height:451px;background:#f2f2f2;border:1px solid #c9c9c9"></div>
<div class="r" style="left:1667px;top:288px;width:247px;height:1px;background:#cfcfcf;"></div>
<div class="r" style="left:1667px;top:680px;width:247px;height:1px;background:#cfcfcf;"></div>
<div class="t" style="left:1691px;top:270px;font-size:11px;color:#555;font-weight:normal;">SKETCH PALETTE</div>
<div class="t" style="left:1691px;top:298px;font-size:11px;color:#333;font-weight:bold;">Options</div>
<div class="t" style="left:1679px;top:328px;font-size:11px;color:#262626;font-weight:normal;">Linetype</div>
<div class="t" style="left:1679px;top:358px;font-size:11px;color:#262626;font-weight:normal;">Look At</div>
<div class="t" style="left:1679px;top:388px;font-size:11px;color:#262626;font-weight:normal;">Sketch Grid</div>
<div class="t" style="left:1679px;top:418px;font-size:11px;color:#262626;font-weight:normal;">Snap</div>
<div class="t" style="left:1679px;top:448px;font-size:11px;color:#262626;font-weight:normal;">Slice</div>
<div class="t" style="left:1679px;top:478px;font-size:11px;color:#262626;font-weight:normal;">Profile</div>
<div class="t" style="left:1679px;top:508px;font-size:11px;color:#262626;font-weight:normal;">Points</div>
<div class="t" style="left:1679px;top:538px;font-size:11px;color:#262626;font-weight:normal;">Dimensions</div>
<div class="t" style="left:1679px;top:568px;font-size:11px;color:#262626;font-weight:normal;">Constraints</div>
<div class="t" style="left:1679px;top:598px;font-size:11px;color:#262626;font-weight:normal;">Projected Geometries</div>
<div class="t" style="left:1679px;top:628px;font-size:11px;color:#262626;font-weight:normal;">Construction Geometries</div>
<div class="t" style="left:1679px;top:658px;font-size:11px;color:#262626;font-weight:normal;">3D Sketch</div>
<svg class="s" style="left:0px;top:0px;" width="1920" height="1032" viewBox="0 0 1920 1032"><circle cx="1682.5" cy="276" r="4.5" fill="#2d2d2d"/><rect x="1680" y="275.2" width="5" height="1.6" fill="#fff"/><path d="M1901 272.5l4.5 3.5-4.5 3.5z M1905.5 272.5l4.5 3.5-4.5 3.5z" fill="#2b2b2b"/><path d="M1676.5 300.5h8.5l-4.25 6.5z" fill="#333"/><defs><linearGradient id="cb" x1="0" y1="0" x2="0" y2="1"><stop offset="0" stop-color="#a6a6a6"/><stop offset="1" stop-color="#e2e2e2"/></linearGradient></defs><rect x="1819.6" y="387.6" width="12.8" height="12.2" rx="2.2" fill="url(#cb)" stroke="#3c3c3c" stroke-width="1.1"/><path d="M1820.3 390v7.5M1831.7 390v7.5" stroke="#8a8a8a" stroke-width="1"/><path d="M1822.4 394.2l2.2 3 5-7.9" fill="none" stroke="#000" stroke-width="1.5"/><rect x="1819.6" y="417.6" width="12.8" height="12.2" rx="2.2" fill="url(#cb)" stroke="#3c3c3c" stroke-width="1.1"/><path d="M1820.3 420v7.5M1831.7 420v7.5" stroke="#8a8a8a" stroke-width="1"/><path d="M1822.4 424.2l2.2 3 5-7.9" fill="none" stroke="#000" stroke-width="1.5"/><rect x="1819.6" y="447.6" width="12.8" height="12.2" rx="2.2" fill="url(#cb)" stroke="#3c3c3c" stroke-width="1.1"/><path d="M1820.3 450v7.5M1831.7 450v7.5" stroke="#8a8a8a" stroke-width="1"/><rect x="1819.6" y="477.6" width="12.8" height="12.2" rx="2.2" fill="url(#cb)" stroke="#3c3c3c" stroke-width="1.1"/><path d="M1820.3 480v7.5M1831.7 480v7.5" stroke="#8a8a8a" stroke-width="1"/><path d="M1822.4 484.2l2.2 3 5-7.9" fill="none" stroke="#000" stroke-width="1.5"/><rect x="1819.6" y="507.6" width="12.8" height="12.2" rx="2.2" fill="url(#cb)" stroke="#3c3c3c" stroke-width="1.1"/><path d="M1820.3 510v7.5M1831.7 510v7.5" stroke="#8a8a8a" stroke-width="1"/><path d="M1822.4 514.2l2.2 3 5-7.9" fill="none" stroke="#000" stroke-width="1.5"/><rect x="1819.6" y="537.6" width="12.8" height="12.2" rx="2.2" fill="url(#cb)" stroke="#3c3c3c" stroke-width="1.1"/><path d="M1820.3 540v7.5M1831.7 540v7.5" stroke="#8a8a8a" stroke-width="1"/><path d="M1822.4 544.2l2.2 3 5-7.9" fill="none" stroke="#000" stroke-width="1.5"/><rect x="1819.6" y="567.6" width="12.8" height="12.2" rx="2.2" fill="url(#cb)" stroke="#3c3c3c" stroke-width="1.1"/><path d="M1820.3 570v7.5M1831.7 570v7.5" stroke="#8a8a8a" stroke-width="1"/><path d="M1822.4 574.2l2.2 3 5-7.9" fill="none" stroke="#000" stroke-width="1.5"/><rect x="1819.6" y="597.6" width="12.8" height="12.2" rx="2.2" fill="url(#cb)" stroke="#3c3c3c" stroke-width="1.1"/><path d="M1820.3 600v7.5M1831.7 600v7.5" stroke="#8a8a8a" stroke-width="1"/><path d="M1822.4 604.2l2.2 3 5-7.9" fill="none" stroke="#000" stroke-width="1.5"/><rect x="1819.6" y="627.6" width="12.8" height="12.2" rx="2.2" fill="url(#cb)" stroke="#3c3c3c" stroke-width="1.1"/><path d="M1820.3 630v7.5M1831.7 630v7.5" stroke="#8a8a8a" stroke-width="1"/><path d="M1822.4 634.2l2.2 3 5-7.9" fill="none" stroke="#000" stroke-width="1.5"/><rect x="1819.6" y="657.6" width="12.8" height="12.2" rx="2.2" fill="url(#cb)" stroke="#3c3c3c" stroke-width="1.1"/><path d="M1820.3 660v7.5M1831.7 660v7.5" stroke="#8a8a8a" stroke-width="1"/><path d="M1822.4 664.2l2.2 3 5-7.9" fill="none" stroke="#000" stroke-width="1.5"/><path d="M1820.7 332.8l12.2-6.4M1822.5 336.3l10.4 5.3" stroke="#555" stroke-width="0.9"/><path d="M1818 334.4h15.7" stroke="#e8782a" stroke-width="1.1" stroke-dasharray="2.2 1.6"/><path d="M1831.3 332v3.7M1828.2 326.1l2.6 2.7M1830.6 339.2l-2.4 2.6" stroke="#e8782a" stroke-width="1"/><path d="M1849 331.3v-3a1.8 1.8 0 0 1 1.8-1.8h6.6v2h4.3v3.2M1849 336.3v2.6a1.8 1.8 0 0 0 1.8 1.8h6.6v-2h4.3v-2.6" fill="none" stroke="#b9b9b9" stroke-width="0.9"/><path d="M1847 333.4h16" stroke="#f0b080" stroke-width="1" stroke-dasharray="4 1.6 1.6 1.6"/><rect x="1818.6" y="361.2" width="15" height="10.2" rx="1" fill="#fff" stroke="#3a424c" stroke-width="1.1"/><rect x="1821.4" y="364.3" width="9.4" height="4.2" fill="#b8c0cc" stroke="#2a323c" stroke-width="1.1"/><path d="M1819 361l4.6-4.8.2 3.4 3.5-1.6 2.6-.8.6 3.8z" fill="#8a929c" stroke="#3a424c" stroke-width="0.7"/></svg>
<div class="r" style="left:1823px;top:689px;width:79px;height:18px;background:#e9e9e9;border:1px solid #b2b2b2;border-radius:2px"></div>
<div class="t" style="left:1828px;top:691.5px;font-size:12px;color:#555;font-weight:normal;">Finish Sketch</div>
<div class="r" style="left:4px;top:953px;width:298px;height:24px;background:#f2f2f2;border:1px solid #c9c9c9;border-top:none"></div>
<div class="t" style="left:29px;top:959px;font-size:11px;color:#555;font-weight:normal;">COMMENTS</div>
<svg class="s" style="left:0px;top:0px;" width="320" height="1032" viewBox="0 0 320 1032"><circle cx="287.6" cy="965.5" r="4.6" fill="#2d2d2d"/><path d="M285 965.5h5.2M287.6 962.9v5.2" stroke="#fff" stroke-width="1.5"/></svg>
<div class="r" style="left:842px;top:952px;width:237px;height:23px;background:#f0f0f0;"></div>
<svg class="s" style="left:0px;top:0px;" width="1920" height="1032" viewBox="0 0 1920 1032"><path d="M845.5 964.2C848.5 961.2 858.5 961 860.6 964.3 861.3 967.3 855 968.6 849.5 967.6" fill="none" stroke="#222" stroke-width="1"/><path d="M846.3 967.4l3.8-2.2v4.4z" fill="#111"/><rect x="852.7" y="958.3" width="2" height="13.2" fill="#fff" stroke="#222" stroke-width="0.8"/><path d="M851 958.8l2.7-2.8 2.7 2.8" fill="none" stroke="#222" stroke-width="0.9"/><path d="M879 961.3l4.8-5 1.2 2.2 2.8-1 2.6-.8v4.6z" fill="#5a5a5a"/><rect x="878.6" y="961.6" width="15.3" height="10.2" rx="0.8" fill="#fff" stroke="#333" stroke-width="1.1"/><rect x="881.4" y="964.3" width="9.6" height="4.3" fill="#a9b4c0" stroke="#333" stroke-width="0.9"/><path d="M908.5 971.5L905 966.5Q904 964.5 906 964.3L908.2 966 907.3 958.5Q907.3 957 908.5 957Q909.6 957 909.8 958.5L910.6 963 910.6 956.8Q910.8 955.6 912 955.6Q913.2 955.6 913.3 956.8L913.5 962.8 914.6 957.3Q915 956.2 916.1 956.5Q917.1 956.9 917 958L916.2 963.5 917.9 959.6Q918.5 958.8 919.4 959.3Q920.2 959.9 919.8 961L917.5 968.5Q916.5 971.5 914 971.5Z" fill="#eef1f4" stroke="#333" stroke-width="1"/><circle cx="934.8" cy="962.3" r="4.8" fill="#d9eaf0" stroke="#333" stroke-width="1.2"/><path d="M938.3 965.8l4 3.8" stroke="#333" stroke-width="2.6"/><path d="M941.5 958.6h4.2M943.6 956.3v4.2M941.5 962.3h4.2" stroke="#333" stroke-width="0.9"/><rect x="956.5" y="956.3" width="15.5" height="15.4" fill="none" stroke="#333" stroke-width="0.9" stroke-dasharray="2 2"/><rect x="960" y="959" width="12.5" height="13.5" fill="#f0f0f0"/><circle cx="962.5" cy="962.5" r="5.8" fill="#dbeef0" stroke="#222" stroke-width="1.2"/><path d="M966.8 966.8l4.5 4.3" stroke="#333" stroke-width="2.6"/><rect x="989.4" y="956.3" width="15.3" height="12" rx="1.3" fill="#f4f4f4" stroke="#333" stroke-width="1"/><rect x="991.4" y="958.2" width="11.3" height="8.3" rx="0.8" fill="#a9c6ec" stroke="#1e3c78" stroke-width="1"/><path d="M993.5 971.5l1-3h5l1 3z" fill="#fafafa" stroke="#333" stroke-width="0.8"/><defs><linearGradient id="ng" x1="0" y1="0" x2="0" y2="1"><stop offset="0" stop-color="#9a9a9a"/><stop offset="1" stop-color="#4a4a4a"/></linearGradient></defs><rect x="1020.2" y="956.3" width="15.6" height="15.4" rx="1.3" fill="url(#ng)" stroke="#333" stroke-width="0.9"/><rect x="1021.6" y="957.7" width="1.9" height="1.9" fill="#fff" opacity="1.0"/><rect x="1021.6" y="960.6500000000001" width="1.9" height="1.9" fill="#fff" opacity="0.88"/><rect x="1021.6" y="963.6" width="1.9" height="1.9" fill="#fff" opacity="0.76"/><rect x="1021.6" y="966.5500000000001" width="1.9" height="1.9" fill="#fff" opacity="0.64"/><rect x="1021.6" y="969.5" width="1.9" height="1.9" fill="#fff" opacity="0.52"/><rect x="1024.55" y="957.7" width="1.9" height="1.9" fill="#fff" opacity="1.0"/><rect x="1024.55" y="960.6500000000001" width="1.9" height="1.9" fill="#fff" opacity="0.88"/><rect x="1024.55" y="963.6" width="1.9" height="1.9" fill="#fff" opacity="0.76"/><rect x="1024.55" y="966.5500000000001" width="1.9" height="1.9" fill="#fff" opacity="0.64"/><rect x="1024.55" y="969.5" width="1.9" height="1.9" fill="#fff" opacity="0.52"/><rect x="1027.5" y="957.7" width="1.9" height="1.9" fill="#fff" opacity="1.0"/><rect x="1027.5" y="960.6500000000001" width="1.9" height="1.9" fill="#fff" opacity="0.88"/><rect x="1027.5" y="963.6" width="1.9" height="1.9" fill="#fff" opacity="0.76"/><rect x="1027.5" y="966.5500000000001" width="1.9" height="1.9" fill="#fff" opacity="0.64"/><rect x="1027.5" y="969.5" width="1.9" height="1.9" fill="#fff" opacity="0.52"/><rect x="1030.45" y="957.7" width="1.9" height="1.9" fill="#fff" opacity="1.0"/><rect x="1030.45" y="960.6500000000001" width="1.9" height="1.9" fill="#fff" opacity="0.88"/><rect x="1030.45" y="963.6" width="1.9" height="1.9" fill="#fff" opacity="0.76"/><rect x="1030.45" y="966.5500000000001" width="1.9" height="1.9" fill="#fff" opacity="0.64"/><rect x="1030.45" y="969.5" width="1.9" height="1.9" fill="#fff" opacity="0.52"/><rect x="1033.4" y="957.7" width="1.9" height="1.9" fill="#fff" opacity="1.0"/><rect x="1033.4" y="960.6500000000001" width="1.9" height="1.9" fill="#fff" opacity="0.88"/><rect x="1033.4" y="963.6" width="1.9" height="1.9" fill="#fff" opacity="0.76"/><rect x="1033.4" y="966.5500000000001" width="1.9" height="1.9" fill="#fff" opacity="0.64"/><rect x="1033.4" y="969.5" width="1.9" height="1.9" fill="#fff" opacity="0.52"/><rect x="1051.2" y="957.3" width="14.6" height="12.6" rx="1.2" fill="#2d4d8a"/><rect x="1052.5" y="958.6" width="5.6" height="4.8" fill="#a9c6ec"/><rect x="1054.0" y="960.0" width="2.6" height="2" fill="#8aa6cc"/><rect x="1052.5" y="964.5" width="5.6" height="4.8" fill="#a9c6ec"/><rect x="1054.0" y="965.9" width="2.6" height="2" fill="#8aa6cc"/><rect x="1059.4" y="958.6" width="5.6" height="4.8" fill="#a9c6ec"/><rect x="1060.9" y="960.0" width="2.6" height="2" fill="#8aa6cc"/><rect x="1059.4" y="964.5" width="5.6" height="4.8" fill="#a9c6ec"/><rect x="1060.9" y="965.9" width="2.6" height="2" fill="#8aa6cc"/><path d="M866.5 962.5h6l-3 4z" fill="#333"/><path d="M977 962.5h6l-3 4z" fill="#333"/><path d="M1007.2 962.5h6l-3 4z" fill="#333"/><path d="M1038 962.5h6l-3 4z" fill="#333"/><path d="M1069.2 962.5h6l-3 4z" fill="#333"/><path d="M1899.5 958a7 7 0 1 0 0 14h7.2v-7a7.2 7.2 0 0 0-7.2-7z" fill="#111"/><path d="M1894.5 966.5l7-4.5M1895.5 968.5l7-4.5M1896.5 970.5l6-4M1897 962.5l-1 3M1901 962l-.5 3M1904 963l-.5 3" stroke="#ddd" stroke-width="0.6" fill="none"/></svg>
<div class="r" style="left:0px;top:982px;width:1920px;height:1px;background:#d4d4d4;"></div>
<div class="r" style="left:0px;top:983px;width:1920px;height:49px;background:#f2f2f2;"></div>
<svg class="s" style="left:0px;top:0px;" width="1920" height="1032" viewBox="0 0 1920 1032"><rect x="11" y="1001" width="2.2" height="12" fill="#616161"/><path d="M22 1001v12l-8-6z" fill="#616161"/><path d="M35.5 1007l9-6v12z" fill="#616161"/><rect x="46" y="1004.5" width="2.2" height="5" fill="#616161"/><path d="M61 999v15l12-7.5z" fill="#616161"/><rect x="84.5" y="1004.5" width="2.2" height="5" fill="#616161"/><path d="M88.5 1001v12l9-6z" fill="#616161"/><path d="M111 1001v12l8-6z" fill="#616161"/><rect x="120" y="1001" width="2.2" height="12" fill="#616161"/><rect x="146.8" y="998.8" width="13.6" height="13.6" fill="#ececec" stroke="#8a8a8a" stroke-width="1.2"/><path d="M146.8 998.8h13.6M146.8 1012.4h13.6" stroke="#b0b0b0" stroke-width="1.4"/><rect x="145.8" y="997.8" width="2" height="2" fill="#2a8ae0"/><rect x="145.8" y="1011.4" width="2" height="2" fill="#2a8ae0"/><rect x="159.4" y="997.8" width="2" height="2" fill="#2a8ae0"/><rect x="159.4" y="1011.4" width="2" height="2" fill="#2a8ae0"/><path d="M150.0 1002.2v6.5M150.0 1002.2h6.5" stroke="#7aaee0" stroke-width="0.8"/><rect x="149.1" y="1001.3000000000001" width="1.8" height="1.8" fill="#2a8ae0"/><rect x="155.6" y="1001.3000000000001" width="1.8" height="1.8" fill="#2a8ae0"/><rect x="149.1" y="1007.8000000000001" width="1.8" height="1.8" fill="#2a8ae0"/><path d="M156.5 1002.6c0 3.5-2 6-6 6.1" fill="none" stroke="#555" stroke-width="0.9"/><path d="M155.2 1012.8l5.4-5.4 2 2-5.4 5.4-2.6.6z" fill="#f2b33b"/><path d="M160.6 1007.4l1.5-1.5 2 2-1.5 1.5z" fill="#e53935"/><rect x="170.75" y="998.8" width="13.6" height="13.6" fill="none" stroke="#dadada" stroke-width="1"/><rect x="169.95" y="998.0" width="1.6" height="1.6" fill="#a8cdee"/><rect x="169.95" y="1011.6" width="1.6" height="1.6" fill="#a8cdee"/><rect x="183.54999999999998" y="998.0" width="1.6" height="1.6" fill="#a8cdee"/><rect x="183.54999999999998" y="1011.6" width="1.6" height="1.6" fill="#a8cdee"/><path d="M173.95 1002.2v6.5M173.95 1002.2h6.5" stroke="#b8d4ee" stroke-width="0.8"/><path d="M180.45 1002.6c0 3.5-2 6-6 6.1" fill="none" stroke="#c4c4c4" stroke-width="0.8"/><path d="M179.14999999999998 1012.8l5.4-5.4 2 2-5.4 5.4-2.6.6z" fill="#f5dcb0"/><path d="M184.54999999999998 1007.4l1.5-1.5 2 2-1.5 1.5z" fill="#f2b8b8"/><rect x="194.70000000000002" y="998.8" width="13.6" height="13.6" fill="none" stroke="#dadada" stroke-width="1"/><rect x="193.9" y="998.0" width="1.6" height="1.6" fill="#a8cdee"/><rect x="193.9" y="1011.6" width="1.6" height="1.6" fill="#a8cdee"/><rect x="207.5" y="998.0" width="1.6" height="1.6" fill="#a8cdee"/><rect x="207.5" y="1011.6" width="1.6" height="1.6" fill="#a8cdee"/><path d="M197.9 1002.2v6.5M197.9 1002.2h6.5" stroke="#b8d4ee" stroke-width="0.8"/><path d="M204.4 1002.6c0 3.5-2 6-6 6.1" fill="none" stroke="#c4c4c4" stroke-width="0.8"/><path d="M203.1 1012.8l5.4-5.4 2 2-5.4 5.4-2.6.6z" fill="#f5dcb0"/><path d="M208.5 1007.4l1.5-1.5 2 2-1.5 1.5z" fill="#f2b8b8"/><path d="M218.85 1001l2.8-2.6h9.5l-2.8 2.6z" fill="#d6e7f5"/><rect x="218.85" y="1001" width="9.5" height="11" fill="#c6dcf0"/><path d="M228.35 1001l2.8-2.6v11l-2.8 2.6z" fill="#b4d0ea"/><path d="M218.85 1012h9.5l2.8-2.6v1.6l-2.8 2.6h-9.5z" fill="#e2e2e2"/><path d="M233.35 1010.6V999.5" stroke="#9a9a9a" stroke-width="0.8"/><path d="M232.15 1001l1.2-2 1.2 2z" fill="#9a9a9a"/><path d="M242.8 1001l2.8-2.6h9.5l-2.8 2.6z" fill="#d6e7f5"/><rect x="242.8" y="1001" width="9.5" height="11" fill="#c6dcf0"/><path d="M252.3 1001l2.8-2.6v11l-2.8 2.6z" fill="#b4d0ea"/><path d="M242.8 1012h9.5l2.8-2.6v1.6l-2.8 2.6h-9.5z" fill="#e2e2e2"/><path d="M257.3 1010.6V999.5" stroke="#9a9a9a" stroke-width="0.8"/><path d="M256.1 1001l1.2-2 1.2 2z" fill="#9a9a9a"/><path d="M266.75 1001l2.8-2.6h9.5l-2.8 2.6z" fill="#d6e7f5"/><rect x="266.75" y="1001" width="9.5" height="11" fill="#c6dcf0"/><path d="M276.25 1001l2.8-2.6v11l-2.8 2.6z" fill="#b4d0ea"/><path d="M266.75 1012h9.5l2.8-2.6v1.6l-2.8 2.6h-9.5z" fill="#e2e2e2"/><path d="M281.25 1010.6V999.5" stroke="#9a9a9a" stroke-width="0.8"/><path d="M280.05 1001l1.2-2 1.2 2z" fill="#9a9a9a"/><path d="M290.7 1000.2a1.8 1.8 0 0 1 1.8-1.8h6a6.5 6.5 0 0 1 6.5 6.5v7.3a1.2 1.2 0 0 1-1.2 1.2h-11.9a1.2 1.2 0 0 1-1.2-1.2z" fill="#ededed" stroke="#d2d2d2" stroke-width="0.9"/><path d="M298.7 999.7a5.6 5.6 0 0 1 5 5" fill="none" stroke="#c2dcf0" stroke-width="2.6"/><path d="M305.0 1007v5.5l-1.5 1.4" fill="none" stroke="#dcdcdc" stroke-width="1.2"/><path d="M314.65 1000.2a1.8 1.8 0 0 1 1.8-1.8h6a6.5 6.5 0 0 1 6.5 6.5v7.3a1.2 1.2 0 0 1-1.2 1.2h-11.9a1.2 1.2 0 0 1-1.2-1.2z" fill="#ededed" stroke="#d2d2d2" stroke-width="0.9"/><path d="M322.65 999.7a5.6 5.6 0 0 1 5 5" fill="none" stroke="#c2dcf0" stroke-width="2.6"/><path d="M328.95 1007v5.5l-1.5 1.4" fill="none" stroke="#dcdcdc" stroke-width="1.2"/><path d="M338.6 1000.2a1.8 1.8 0 0 1 1.8-1.8h6a6.5 6.5 0 0 1 6.5 6.5v7.3a1.2 1.2 0 0 1-1.2 1.2h-11.9a1.2 1.2 0 0 1-1.2-1.2z" fill="#ededed" stroke="#d2d2d2" stroke-width="0.9"/><path d="M346.6 999.7a5.6 5.6 0 0 1 5 5" fill="none" stroke="#c2dcf0" stroke-width="2.6"/><path d="M352.90000000000003 1007v5.5l-1.5 1.4" fill="none" stroke="#dcdcdc" stroke-width="1.2"/><path d="M362.54999999999995 1000.2a1.8 1.8 0 0 1 1.8-1.8h6a6.5 6.5 0 0 1 6.5 6.5v7.3a1.2 1.2 0 0 1-1.2 1.2h-11.9a1.2 1.2 0 0 1-1.2-1.2z" fill="#ededed" stroke="#d2d2d2" stroke-width="0.9"/><path d="M370.54999999999995 999.7a5.6 5.6 0 0 1 5 5" fill="none" stroke="#c2dcf0" stroke-width="2.6"/><path d="M376.84999999999997 1007v5.5l-1.5 1.4" fill="none" stroke="#dcdcdc" stroke-width="1.2"/><path d="M386.5 1000.2a1.8 1.8 0 0 1 1.8-1.8h6a6.5 6.5 0 0 1 6.5 6.5v7.3a1.2 1.2 0 0 1-1.2 1.2h-11.9a1.2 1.2 0 0 1-1.2-1.2z" fill="#ededed" stroke="#d2d2d2" stroke-width="0.9"/><path d="M394.5 999.7a5.6 5.6 0 0 1 5 5" fill="none" stroke="#c2dcf0" stroke-width="2.6"/><path d="M400.8 1007v5.5l-1.5 1.4" fill="none" stroke="#dcdcdc" stroke-width="1.2"/><path d="M410.45 1000.2a1.8 1.8 0 0 1 1.8-1.8h6a6.5 6.5 0 0 1 6.5 6.5v7.3a1.2 1.2 0 0 1-1.2 1.2h-11.9a1.2 1.2 0 0 1-1.2-1.2z" fill="#ededed" stroke="#d2d2d2" stroke-width="0.9"/><path d="M418.45 999.7a5.6 5.6 0 0 1 5 5" fill="none" stroke="#c2dcf0" stroke-width="2.6"/><path d="M424.75 1007v5.5l-1.5 1.4" fill="none" stroke="#dcdcdc" stroke-width="1.2"/><path d="M434.4 1000.2a1.8 1.8 0 0 1 1.8-1.8h6a6.5 6.5 0 0 1 6.5 6.5v7.3a1.2 1.2 0 0 1-1.2 1.2h-11.9a1.2 1.2 0 0 1-1.2-1.2z" fill="#ededed" stroke="#d2d2d2" stroke-width="0.9"/><path d="M442.4 999.7a5.6 5.6 0 0 1 5 5" fill="none" stroke="#c2dcf0" stroke-width="2.6"/><path d="M448.7 1007v5.5l-1.5 1.4" fill="none" stroke="#dcdcdc" stroke-width="1.2"/><path d="M458.34999999999997 1000.2a1.8 1.8 0 0 1 1.8-1.8h6a6.5 6.5 0 0 1 6.5 6.5v7.3a1.2 1.2 0 0 1-1.2 1.2h-11.9a1.2 1.2 0 0 1-1.2-1.2z" fill="#ededed" stroke="#d2d2d2" stroke-width="0.9"/><path d="M466.34999999999997 999.7a5.6 5.6 0 0 1 5 5" fill="none" stroke="#c2dcf0" stroke-width="2.6"/><path d="M472.65 1007v5.5l-1.5 1.4" fill="none" stroke="#dcdcdc" stroke-width="1.2"/><path d="M482.3 1000.2a1.8 1.8 0 0 1 1.8-1.8h6a6.5 6.5 0 0 1 6.5 6.5v7.3a1.2 1.2 0 0 1-1.2 1.2h-11.9a1.2 1.2 0 0 1-1.2-1.2z" fill="#ededed" stroke="#d2d2d2" stroke-width="0.9"/><path d="M490.3 999.7a5.6 5.6 0 0 1 5 5" fill="none" stroke="#c2dcf0" stroke-width="2.6"/><path d="M496.6 1007v5.5l-1.5 1.4" fill="none" stroke="#dcdcdc" stroke-width="1.2"/><path d="M506.25 1000.2a1.8 1.8 0 0 1 1.8-1.8h6a6.5 6.5 0 0 1 6.5 6.5v7.3a1.2 1.2 0 0 1-1.2 1.2h-11.9a1.2 1.2 0 0 1-1.2-1.2z" fill="#ededed" stroke="#d2d2d2" stroke-width="0.9"/><path d="M514.25 999.7a5.6 5.6 0 0 1 5 5" fill="none" stroke="#c2dcf0" stroke-width="2.6"/><path d="M520.55 1007v5.5l-1.5 1.4" fill="none" stroke="#dcdcdc" stroke-width="1.2"/><path d="M530.2 1000.2a1.8 1.8 0 0 1 1.8-1.8h6a6.5 6.5 0 0 1 6.5 6.5v7.3a1.2 1.2 0 0 1-1.2 1.2h-11.9a1.2 1.2 0 0 1-1.2-1.2z" fill="#ededed" stroke="#d2d2d2" stroke-width="0.9"/><path d="M538.2 999.7a5.6 5.6 0 0 1 5 5" fill="none" stroke="#c2dcf0" stroke-width="2.6"/><path d="M544.5 1007v5.5l-1.5 1.4" fill="none" stroke="#dcdcdc" stroke-width="1.2"/><path d="M554.15 1000.2a1.8 1.8 0 0 1 1.8-1.8h6a6.5 6.5 0 0 1 6.5 6.5v7.3a1.2 1.2 0 0 1-1.2 1.2h-11.9a1.2 1.2 0 0 1-1.2-1.2z" fill="#ededed" stroke="#d2d2d2" stroke-width="0.9"/><path d="M562.15 999.7a5.6 5.6 0 0 1 5 5" fill="none" stroke="#c2dcf0" stroke-width="2.6"/><path d="M568.4499999999999 1007v5.5l-1.5 1.4" fill="none" stroke="#dcdcdc" stroke-width="1.2"/><path d="M578.0999999999999 1000.2a1.8 1.8 0 0 1 1.8-1.8h6a6.5 6.5 0 0 1 6.5 6.5v7.3a1.2 1.2 0 0 1-1.2 1.2h-11.9a1.2 1.2 0 0 1-1.2-1.2z" fill="#ededed" stroke="#d2d2d2" stroke-width="0.9"/><path d="M586.0999999999999 999.7a5.6 5.6 0 0 1 5 5" fill="none" stroke="#c2dcf0" stroke-width="2.6"/><path d="M592.3999999999999 1007v5.5l-1.5 1.4" fill="none" stroke="#dcdcdc" stroke-width="1.2"/><path d="M154 1022.8H586.5M155.00 1022.8v-5.6M178.95 1022.8v-5.6M202.90 1022.8v-5.6M226.85 1022.8v-5.6M250.80 1022.8v-5.6M274.75 1022.8v-5.6M298.70 1022.8v-5.6M322.65 1022.8v-5.6M346.60 1022.8v-5.6M370.55 1022.8v-5.6M394.50 1022.8v-5.6M418.45 1022.8v-5.6M442.40 1022.8v-5.6M466.35 1022.8v-5.6M490.30 1022.8v-5.6M514.25 1022.8v-5.6M538.20 1022.8v-5.6M562.15 1022.8v-5.6M586.10 1022.8v-5.6" fill="none" stroke="#c4c4c4" stroke-width="1.9"/><path d="M591.5 992.5h13l-5 4.5v3h-3v-3z" fill="#555"/><rect x="597" y="997" width="2.2" height="27" fill="#555"/><g transform="translate(1898 1007)"><circle r="5" fill="#888"/><rect x="-1.4" y="-7" width="2.8" height="3.5" fill="#888" transform="rotate(0)"/><rect x="-1.4" y="-7" width="2.8" height="3.5" fill="#888" transform="rotate(45)"/><rect x="-1.4" y="-7" width="2.8" height="3.5" fill="#888" transform="rotate(90)"/><rect x="-1.4" y="-7" width="2.8" height="3.5" fill="#888" transform="rotate(135)"/><rect x="-1.4" y="-7" width="2.8" height="3.5" fill="#888" transform="rotate(180)"/><rect x="-1.4" y="-7" width="2.8" height="3.5" fill="#888" transform="rotate(225)"/><rect x="-1.4" y="-7" width="2.8" height="3.5" fill="#888" transform="rotate(270)"/><rect x="-1.4" y="-7" width="2.8" height="3.5" fill="#888" transform="rotate(315)"/><circle r="2" fill="#f2f2f2"/></g></svg>
</body></html>
